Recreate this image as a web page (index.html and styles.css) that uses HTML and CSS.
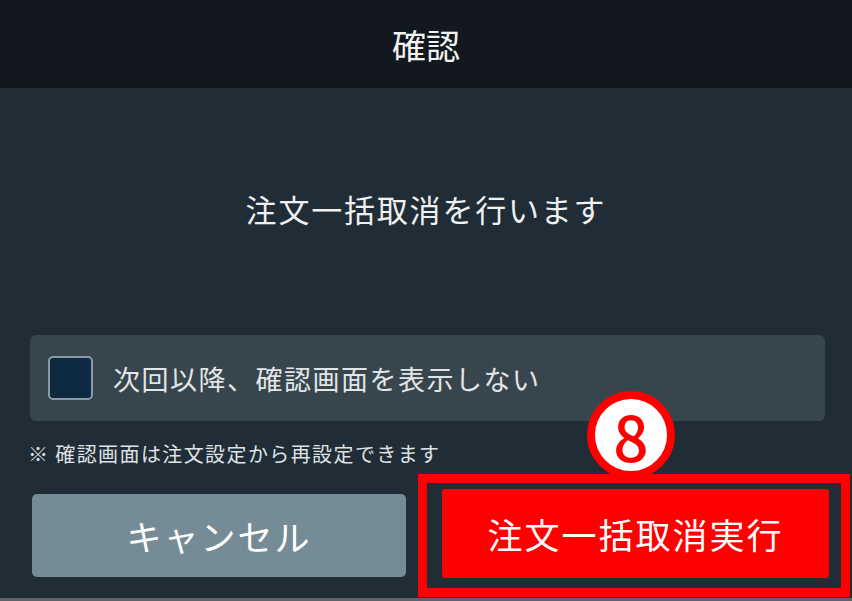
FILE: index.html
```html
<!DOCTYPE html>
<html lang="ja">
<head>
    <meta charset="UTF-8">
    <meta name="viewport" content="width=device-width, initial-scale=1.0">
    <title>確認</title>
    <link rel="stylesheet" href="styles.css">
</head>
<body>

<div class="dialog">
    <div class="header">確認</div>
    <div class="message">注文一括取消を行います</div>
    <label class="panel">
        <span class="check"></span>
        <span class="check-label">次回以降、確認画面を表示しない</span>
    </label>
    <div class="note">※ 確認画面は注文設定から再設定できます</div>
    <div class="actions">
        <button class="btn cancel">キャンセル</button>
        <button class="btn execute">注文一括取消実行</button>
    </div>

    <!-- annotation -->
    <div class="mark-frame"></div>
    <div class="mark-num">8</div>
</div>

</body>
</html>
```

FILE: styles.css
```css
body {
    margin: 0;
    background-color: #5e6469;
    font-family: "Noto Sans CJK JP", "Noto Sans", sans-serif;
}
.dialog {
    position: relative;
    width: 852px;
    height: 598px;
    background-color: #212d36;
    color: #eef0f1;
    overflow: hidden;
}
.header {
    height: 88px;
    display: flex;
    align-items: center;
    justify-content: center;
    background-color: #13181f;
    font-size: 34px;
    color: #f2f2f2;
}
.message {
    height: 247px;
    box-sizing: border-box;
    padding-bottom: 7px;
    display: flex;
    align-items: center;
    justify-content: center;
    font-size: 31px;
    letter-spacing: 1.8px;
}
.panel {
    display: flex;
    align-items: center;
    margin-left: 30px;
    width: 795px;
    height: 86px;
    box-sizing: border-box;
    padding-left: 18px;
    border-radius: 6px;
    background-color: #37454d;
}
.check {
    width: 45px;
    height: 44px;
    box-sizing: border-box;
    margin-right: 20px;
    border: 2px solid #8b9ba6;
    border-radius: 5px;
    background-color: #0e2a42;
}
.check-label {
    font-size: 27px;
    color: #e2e5e7;
    letter-spacing: 1.5px;
}
.note {
    margin-top: 20px;
    padding-left: 28px;
    font-size: 20px;
    line-height: 26px;
    letter-spacing: 1.4px;
    color: #dfe2e4;
}
.actions {
    display: flex;
    align-items: flex-start;
    margin-top: 22px;
}
.btn {
    border: none;
    font-family: inherit;
    color: #ffffff;
    font-size: 35px;
    letter-spacing: 2px;
    padding: 0;
}
.cancel {
    margin-top: 5px;
    margin-left: 32px;
    width: 374px;
    height: 83px;
    border-radius: 5px;
    background-color: #758b95;
}
.execute {
    margin-left: 36px;
    width: 387px;
    height: 89px;
    border-radius: 3px;
    background-color: #ff0000;
}
.mark-frame {
    position: absolute;
    left: 418px;
    top: 474px;
    width: 432px;
    height: 123px;
    box-sizing: border-box;
    border: 9px solid #ff0000;
}
.mark-num {
    position: absolute;
    left: 587px;
    top: 391px;
    width: 88px;
    height: 88px;
    box-sizing: border-box;
    border: 8px solid #ff0000;
    border-radius: 50%;
    background-color: #ffffff;
    color: #ff0000;
    display: flex;
    align-items: center;
    justify-content: center;
    font-size: 62px;
    font-weight: 500;
    line-height: 1;
}
```
